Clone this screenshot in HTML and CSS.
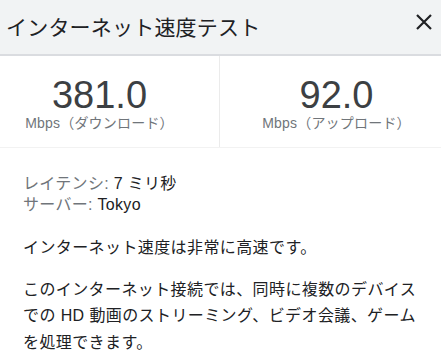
FILE: index.html
```html
<!DOCTYPE html>
<html lang="ja">
<head>
  <meta charset="UTF-8">
  <title>インターネット速度テスト</title>
  <link rel="stylesheet" href="styles.css">
</head>
<body>
  <div class="panel">
    <div class="panel-head">
      <h1 class="title">インターネット速度テスト</h1>
      <button class="close" aria-label="閉じる">
        <svg width="18" height="18" viewBox="0 0 18 18">
          <path d="M2 2 L16 16 M16 2 L2 16" stroke="#202124" stroke-width="2.2" fill="none"/>
        </svg>
      </button>
    </div>

    <div class="stats">
      <div class="stat stat-down">
        <div class="stat-value">381.0</div>
        <div class="stat-label">Mbps（ダウンロード）</div>
      </div>
      <div class="stat stat-up">
        <div class="stat-value">92.0</div>
        <div class="stat-label">Mbps（アップロード）</div>
      </div>
    </div>

    <div class="details">
      <div class="meta">
        <div><span class="meta-key">レイテンシ:</span> 7 ミリ秒</div>
        <div><span class="meta-key">サーバー:</span> Tokyo</div>
      </div>
      <p class="verdict">インターネット速度は非常に高速です。</p>
      <p class="verdict">このインターネット接続では、同時に複数のデバイスでの HD 動画のストリーミング、ビデオ会議、ゲームを処理できます。</p>
    </div>
  </div>
</body>
</html>
```

FILE: styles.css
```css
body {
  margin: 0;
  font-family: "Liberation Sans", "Noto Sans CJK JP", sans-serif;
  background: #fff;
  color: #202124;
}

.panel {
  width: 441px;
}

.panel-head {
  display: flex;
  align-items: center;
  justify-content: space-between;
  height: 56px;
  padding: 0 8px 0 6px;
  background: #f1f3f4;
  border-bottom: 2px solid #dadce0;
  box-sizing: border-box;
}

.title {
  margin: 0;
  font-size: 21px;
  font-weight: normal;
  letter-spacing: 0.2px;
  color: #202124;
  line-height: 1;
}

.close {
  align-self: flex-start;
  margin-top: 13px;
  padding: 0;
  width: 18px;
  height: 18px;
  border: none;
  background: none;
}

.close svg {
  display: block;
}

.stats {
  display: grid;
  grid-template-columns: 220px 1fr;
  height: 91px;
  border-bottom: 1px solid #f2f2f2;
}

.stat {
  text-align: center;
  padding-top: 20px;
}

.stat-down {
  padding-right: 20px;
  border-right: 1px solid #ebebeb;
}

.stat-up {
  padding-left: 12px;
}

.stat-value {
  font-size: 38px;
  line-height: 38px;
  color: #3c4043;
}

.stat-label {
  margin-top: 1px;
  font-size: 14px;
  line-height: 16px;
  letter-spacing: 0.2px;
  color: #70757a;
}

.details {
  padding: 25px 23px 0;
  font-size: 16px;
}

.meta {
  line-height: 21px;
  letter-spacing: 0.3px;
}

.meta-key {
  color: #70757a;
}

.verdict {
  margin: 20px 0 0;
  line-height: 26.7px;
  letter-spacing: 0.4px;
  color: #202124;
}

.verdict + .verdict {
  margin-top: 15px;
}
```
